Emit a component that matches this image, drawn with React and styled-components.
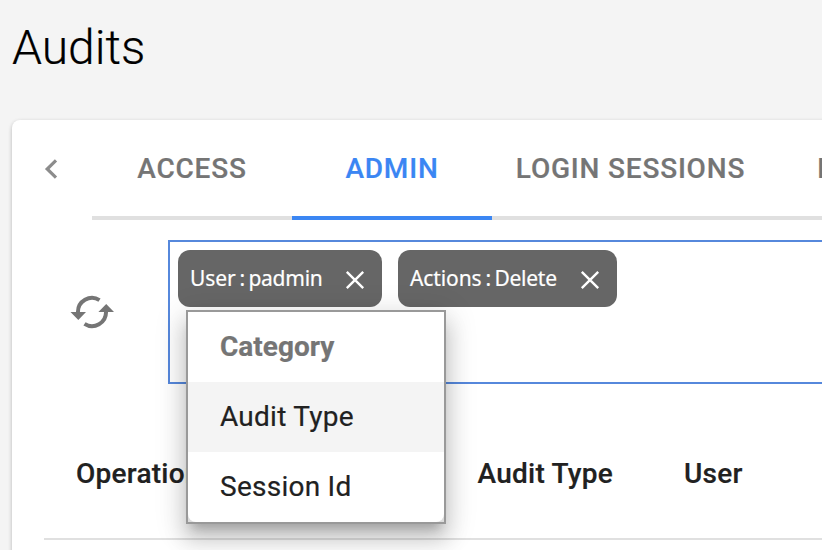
import React from "react";
import styled, { createGlobalStyle, css } from "styled-components";

const GlobalStyle = createGlobalStyle`
  * { box-sizing: border-box; }
  html, body { margin: 0; height: 100%; overflow: hidden; background: #f4f4f4; }
  body {
    font-family: Roboto, "Liberation Sans", sans-serif;
    -webkit-font-smoothing: antialiased;
    -webkit-text-stroke: 0.2px;
  }
`;

const Page = styled.main`
  width: 822px;
  height: 550px;
  overflow: hidden;
  display: flex;
  flex-direction: column;
  background: #f4f4f4;
`;

const Title = styled.h1`
  margin: 0;
  height: 120px;
  flex: none;
  padding: 20px 0 0 12px;
  font-size: 48px;
  line-height: 56px;
  font-weight: 300;
  color: #000;
`;

const Card = styled.section`
  flex: none;
  width: 1200px;
  height: 600px;
  margin-left: 12px;
  background: #fff;
  border-radius: 8px;
  box-shadow: 0 2px 4px rgba(0, 0, 0, 0.22), 0 0 4px rgba(0, 0, 0, 0.04);
`;

const TabBar = styled.nav`
  display: flex;
  height: 100px;
`;

const PrevButton = styled.button`
  flex: none;
  width: 80px;
  height: 100px;
  padding: 0 2px 2px 0;
  border: 0;
  background: none;
  display: flex;
  align-items: center;
  justify-content: center;
`;

const TabList = styled.div`
  display: flex;
  flex: 1;
`;

const Tab = styled.button`
  flex: ${(p) => (p.$width ? `0 0 ${p.$width}px` : "1")};
  height: 100px;
  padding: ${(p) => (p.$width ? "1px 0 0" : "1px 48px 0")};
  text-align: ${(p) => (p.$width ? "center" : "left")};
  border: 0;
  border-bottom: 4px solid ${(p) => (p.$active ? "#3b86f3" : "#e0e0e0")};
  background: none;
  color: ${(p) => (p.$active ? "#3b86f3" : "#757575")};
  font: 500 28px/40px Roboto, sans-serif;
  letter-spacing: 0.8px;
  white-space: nowrap;
`;

const FilterRow = styled.div`
  display: flex;
  height: 164px;
  padding-top: 20px;
`;

const RefreshButton = styled.button`
  width: 156px;
  height: 144px;
  padding: 0 0 0 4px;
  border: 0;
  background: none;
  display: flex;
  align-items: center;
  justify-content: center;
`;

const FilterBox = styled.div`
  position: relative;
  flex: 1;
  height: 144px;
  padding: 8px;
  border: 2px solid #5688dc;
  display: flex;
  align-items: flex-start;
  gap: 16px;
`;

const Chip = styled.div`
  display: flex;
  align-items: center;
  justify-content: space-between;
  width: ${(p) => p.$width}px;
  height: 57px;
  padding: 0 17px 0 12px;
  border-radius: 12px;
  background: #666;
  color: #fff;
`;

const ChipLabel = styled.span`
  display: flex;
  gap: 3.5px;
  font: 400 21px/30px "Noto Sans", "Open Sans", sans-serif;
  letter-spacing: -0.1px;
  white-space: nowrap;
  margin-bottom: 2px;
`;

const ChipKey = styled.span`
  word-spacing: -1.5px;
`;

const ChipValue = styled.span`
  letter-spacing: -0.25px;
`;

const ChipIcon = styled.svg`
  width: 20px;
  height: 20px;
  margin-top: 3px;
`;

const Menu = styled.div`
  position: absolute;
  z-index: 2;
  top: 68px;
  left: 16px;
  width: 260px;
  border: 2px solid #999;
  background: #ddd;
  box-shadow: 0 10px 10px -6px rgba(0, 0, 0, 0.2),
    0 16px 20px 2px rgba(0, 0, 0, 0.14), 0 6px 28px 4px rgba(0, 0, 0, 0.12);
`;

const MenuPanel = styled.div`
  background: #fff;
  border-radius: 0 0 8px 8px;
  overflow: hidden;
`;

const MenuItem = styled.div`
  height: 70px;
  padding-left: 32px;
  font-size: 28px;
  line-height: 69px;
  letter-spacing: 0.25px;
  color: #212121;
  ${(p) => p.$active && css`background: #f4f4f4;`}
`;

const MenuHeading = styled(MenuItem)`
  font-weight: 700;
  letter-spacing: 0;
  color: #757575;
`;

const TableHead = styled.div`
  display: grid;
  grid-template-columns: 401.5px 206.5px 1fr;
  align-items: center;
  height: 156px;
  margin-left: 32px;
  padding: 26px 0 0 32px;
  border-bottom: 2px solid #e0e0e0;
`;

const HeadCell = styled.div`
  font-size: 28px;
  line-height: 40px;
  font-weight: 500;
  letter-spacing: 0.25px;
  color: #212121;
`;

const TABS = [
  { label: "ACCESS", width: 200 },
  { label: "ADMIN", width: 200, active: true },
  { label: "LOGIN SESSIONS", width: 277 },
  { label: "I" },
];

const CHIPS = [
  { name: "User :", value: "padmin", width: 204 },
  { name: "Actions :", value: "Delete", width: 219 },
];

const CloseIcon = () => (
  <ChipIcon viewBox="0 0 20 20" fill="none" stroke="#fff" strokeWidth="2.4">
    <path d="M1.8 1.8L18.2 18.2M18.2 1.8L1.8 18.2" />
  </ChipIcon>
);

export default function App() {
  return (
    <Page>
      <GlobalStyle />
      <Title>Audits</Title>
      <Card>
        <TabBar>
          <PrevButton aria-label="Previous tabs">
            <svg width="14" height="20" viewBox="0 0 14 20" fill="none" stroke="#8c8c8c" strokeWidth="3.2">
              <path d="M12 1.4L3.2 10L12 18.6" />
            </svg>
          </PrevButton>
          <TabList>
            {TABS.map((t) => (
              <Tab key={t.label} $width={t.width} $active={t.active}>{t.label}</Tab>
            ))}
          </TabList>
        </TabBar>
        <FilterRow>
          <RefreshButton aria-label="Refresh">
            <svg width="44" height="34" viewBox="70 295 44 34">
              <g fill="none" stroke="#757575" strokeWidth="4">
                <path d="M99.5 300.1A14 14 0 0 0 78 312.5" />
                <path d="M84.5 323.9A14 14 0 0 0 106 311.5" />
              </g>
              <path fill="#757575" d="M70.5 312H86L78.3 320zM98.4 312H114L106.2 304z" />
            </svg>
          </RefreshButton>
          <FilterBox>
            {CHIPS.map((c) => (
              <Chip key={c.name} $width={c.width}>
                <ChipLabel>
                  <ChipKey>{c.name}</ChipKey>
                  <ChipValue>{c.value}</ChipValue>
                </ChipLabel>
                <CloseIcon />
              </Chip>
            ))}
            <Menu>
              <MenuPanel>
                <MenuHeading>Category</MenuHeading>
                <MenuItem $active>Audit Type</MenuItem>
                <MenuItem>Session Id</MenuItem>
              </MenuPanel>
            </Menu>
          </FilterBox>
        </FilterRow>
        <TableHead>
          <HeadCell>Operation</HeadCell>
          <HeadCell>Audit Type</HeadCell>
          <HeadCell>User</HeadCell>
        </TableHead>
      </Card>
    </Page>
  );
}
